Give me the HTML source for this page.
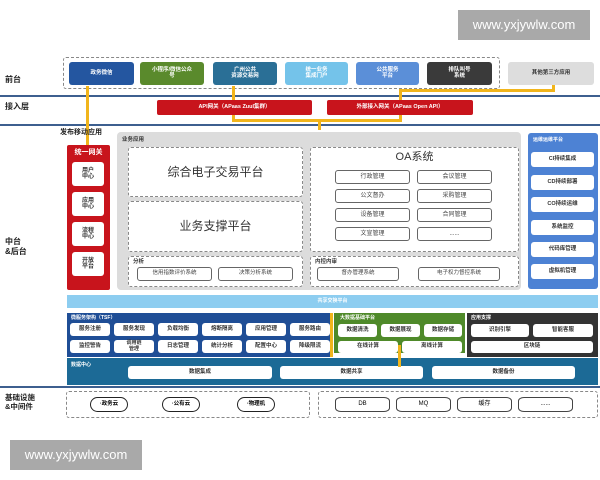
<!DOCTYPE html>
<html><head><meta charset="utf-8"><style>
*{margin:0;padding:0;box-sizing:border-box}
body{width:600px;height:480px;background:#fff;position:relative;overflow:hidden;font-family:"Liberation Sans","Noto Sans CJK SC",sans-serif;}
div{position:absolute}
.c{display:flex;align-items:center;justify-content:center;text-align:center;line-height:1.05}
.f{color:#fff;font-size:5.5px;font-weight:bold;border-radius:3px}
.w{background:#fff;border-radius:3px;font-size:6px;color:#333;font-weight:bold}
.o{background:#fff;border:1px solid #666;border-radius:3px;font-size:6px;color:#444}
.d{border:1px dashed #888;border-radius:3px}
.lb{font-size:8px;font-weight:bold;color:#222;line-height:1.2}
.y{background:#f1b51c}
.t{font-size:5px;font-weight:bold;color:#fff}
</style></head><body>
<div class="c" style="left:458px;top:10px;width:132px;height:30px;background:#a9a9a9;color:#fff;font-size:13px">www.yxjywlw.com</div>
<div class="c" style="left:10px;top:440px;width:132px;height:30px;background:#a9a9a9;color:#fff;font-size:13px">www.yxjywlw.com</div>

<div class="d" style="left:63px;top:57px;width:437px;height:32px"></div>
<div class="c f" style="left:69px;top:62px;width:65px;height:23px;background:#2456a0">政务微信</div>
<div class="c f" style="left:140px;top:62px;width:64px;height:23px;background:#5a8a2c">小程序/微信公众<br>号</div>
<div class="c f" style="left:213px;top:62px;width:64px;height:23px;background:#2a6f96">广州公共<br>资源交易网</div>
<div class="c f" style="left:285px;top:62px;width:63px;height:23px;background:#74c3ea">统一业务<br>集成门户</div>
<div class="c f" style="left:356px;top:62px;width:63px;height:23px;background:#5b8fd8">公共服务<br>平台</div>
<div class="c f" style="left:427px;top:62px;width:65px;height:23px;background:#3a3a3a">排队叫号<br>系统</div>
<div class="c" style="left:508px;top:62px;width:86px;height:23px;background:#ddd;border-radius:3px;font-size:5.5px;font-weight:bold;color:#333">其他第三方应用</div>
<div class="lb" style="left:5px;top:75px">前台</div>
<div style="left:0;top:95px;width:600px;height:2px;background:#3d5f8f"></div>
<div class="lb" style="left:5px;top:102px">接入层</div>
<div class="c f" style="left:157px;top:100px;width:155px;height:15px;background:#c8141c;border-radius:2px">API网关（APaas Zuul集群）</div>
<div class="c f" style="left:327px;top:100px;width:146px;height:15px;background:#c8141c;border-radius:2px">外部接入网关（APaas Open API）</div>
<div style="left:0;top:124px;width:600px;height:2px;background:#3d5f8f"></div>
<!-- yellow -->
<div class="y" style="left:86px;top:86px;width:3px;height:60px"></div>
<div class="y" style="left:232px;top:86px;width:3px;height:14px"></div>
<div class="y" style="left:232px;top:115px;width:3px;height:7px"></div>
<div class="y" style="left:232px;top:119px;width:170px;height:3px"></div>
<div class="y" style="left:318px;top:119px;width:3px;height:11px"></div>
<div class="y" style="left:399px;top:115px;width:3px;height:7px"></div>
<div class="y" style="left:399px;top:89px;width:3px;height:11px"></div>
<div class="y" style="left:399px;top:89px;width:156px;height:3px"></div>
<div class="y" style="left:552px;top:85px;width:3px;height:7px"></div>

<div class="lb" style="left:60px;top:129px;font-size:7px">发布移动应用</div>
<div style="left:67px;top:145px;width:43px;height:145px;background:#c8141c;border-radius:2px"></div>
<div class="c" style="left:67px;top:147px;width:43px;height:12px;color:#fff;font-size:7px;font-weight:bold">统一网关</div>
<div class="c w" style="left:72px;top:162px;width:32px;height:24px">用户<br>中心</div>
<div class="c w" style="left:72px;top:192px;width:32px;height:24px">应用<br>中心</div>
<div class="c w" style="left:72px;top:222px;width:32px;height:24px">流程<br>中心</div>
<div class="c w" style="left:72px;top:252px;width:32px;height:24px">开放<br>平台</div>
<div class="lb" style="left:5px;top:237px">中台<br>&amp;后台</div>

<div style="left:117px;top:132px;width:404px;height:158px;background:#dcdcdc;border-radius:4px"></div>
<div style="left:122px;top:135px;font-size:5.5px;font-weight:bold;color:#333">业务应用</div>
<div class="c d" style="left:128px;top:147px;width:175px;height:50px;background:#fff;font-size:12px;color:#333">综合电子交易平台</div>
<div class="c d" style="left:128px;top:201px;width:175px;height:51px;background:#fff;font-size:12px;color:#333">业务支撑平台</div>
<div class="d" style="left:128px;top:256px;width:175px;height:31px;background:#fff"></div>
<div style="left:133px;top:257px;font-size:5.5px;font-weight:bold;color:#333">分析</div>
<div class="c o" style="left:137px;top:267px;width:75px;height:14px;font-size:5.5px">信用指数评价系统</div>
<div class="c o" style="left:218px;top:267px;width:75px;height:14px;font-size:5.5px">决策分析系统</div>
<div class="d" style="left:310px;top:147px;width:209px;height:105px;background:#fff"></div>
<div class="c" style="left:310px;top:150px;width:209px;height:16px;font-size:11px;color:#333">OA系统</div>
<div class="c o" style="left:335px;top:170px;width:75px;height:14px">行政管理</div>
<div class="c o" style="left:417px;top:170px;width:75px;height:14px">会议管理</div>
<div class="c o" style="left:335px;top:189px;width:75px;height:14px">公文督办</div>
<div class="c o" style="left:417px;top:189px;width:75px;height:14px">采购管理</div>
<div class="c o" style="left:335px;top:208px;width:75px;height:14px">设备管理</div>
<div class="c o" style="left:417px;top:208px;width:75px;height:14px">合同管理</div>
<div class="c o" style="left:335px;top:227px;width:75px;height:14px">文宣管理</div>
<div class="c o" style="left:417px;top:227px;width:75px;height:14px">......</div>
<div class="d" style="left:310px;top:256px;width:209px;height:31px;background:#fff"></div>
<div style="left:315px;top:257px;font-size:5.5px;font-weight:bold;color:#333">内控内审</div>
<div class="c o" style="left:317px;top:267px;width:82px;height:14px;font-size:5.5px">督办管理系统</div>
<div class="c o" style="left:418px;top:267px;width:82px;height:14px;font-size:5.5px">电子权力督控系统</div>

<div style="left:528px;top:133px;width:70px;height:156px;background:#4d82d4;border-radius:3px"></div>
<div class="t" style="left:533px;top:136px">运维运维平台</div>
<div class="c w" style="left:531px;top:152px;width:63px;height:15px;font-size:5.5px">CI持续集成</div>
<div class="c w" style="left:531px;top:175px;width:63px;height:15px;font-size:5.5px">CD持续部署</div>
<div class="c w" style="left:531px;top:197px;width:63px;height:15px;font-size:5.5px">CO持续运维</div>
<div class="c w" style="left:531px;top:220px;width:63px;height:15px;font-size:5.5px">系统监控</div>
<div class="c w" style="left:531px;top:242px;width:63px;height:15px;font-size:5.5px">代码库管理</div>
<div class="c w" style="left:531px;top:264px;width:63px;height:15px;font-size:5.5px">虚拟机管理</div>

<div style="left:67px;top:295px;width:531px;height:13px;background:#8dcdf0"></div>
<div class="c t" style="left:67px;top:295px;width:531px;height:13px">共享交换平台</div>

<div style="left:67px;top:313px;width:265px;height:44px;background:#1f4e96"></div>
<div class="t" style="left:71px;top:314px">微服务架构（TSF）</div>
<div class="c w" style="left:70px;top:323px;width:40px;height:13px;font-size:5.5px">服务注册</div>
<div class="c w" style="left:114px;top:323px;width:40px;height:13px;font-size:5.5px">服务发现</div>
<div class="c w" style="left:158px;top:323px;width:40px;height:13px;font-size:5.5px">负载均衡</div>
<div class="c w" style="left:202px;top:323px;width:40px;height:13px;font-size:5.5px">熔断隔离</div>
<div class="c w" style="left:246px;top:323px;width:40px;height:13px;font-size:5.5px">应用管理</div>
<div class="c w" style="left:290px;top:323px;width:40px;height:13px;font-size:5.5px">服务路由</div>
<div class="c w" style="left:70px;top:340px;width:40px;height:13px;font-size:5.5px">监控警告</div>
<div class="c w" style="left:114px;top:340px;width:40px;height:13px;font-size:5px">调用链<br>管理</div>
<div class="c w" style="left:158px;top:340px;width:40px;height:13px;font-size:5.5px">日志管理</div>
<div class="c w" style="left:202px;top:340px;width:40px;height:13px;font-size:5.5px">统计分析</div>
<div class="c w" style="left:246px;top:340px;width:40px;height:13px;font-size:5.5px">配置中心</div>
<div class="c w" style="left:290px;top:340px;width:40px;height:13px;font-size:5.5px">降级限流</div>
<div style="left:334px;top:313px;width:131px;height:40px;background:#4f8a2a"></div>
<div class="t" style="left:340px;top:314px">大数据基础平台</div>
<div class="c w" style="left:338px;top:324px;width:39px;height:13px;font-size:5.5px">数据清洗</div>
<div class="c w" style="left:381px;top:324px;width:39px;height:13px;font-size:5.5px">数据展现</div>
<div class="c w" style="left:424px;top:324px;width:38px;height:13px;font-size:5.5px">数据存储</div>
<div class="c w" style="left:338px;top:341px;width:60px;height:12px;font-size:5.5px">在线计算</div>
<div class="c w" style="left:402px;top:341px;width:60px;height:12px;font-size:5.5px">离线计算</div>
<div style="left:467px;top:313px;width:131px;height:44px;background:#333"></div>
<div class="t" style="left:471px;top:314px">应用支撑</div>
<div class="c w" style="left:471px;top:324px;width:58px;height:13px;font-size:5.5px">识别引擎</div>
<div class="c w" style="left:533px;top:324px;width:60px;height:13px;font-size:5.5px">智能客服</div>
<div class="c w" style="left:471px;top:341px;width:122px;height:12px;font-size:5.5px">区块链</div>

<div style="left:67px;top:358px;width:531px;height:27px;background:#1c6a96"></div>
<div class="t" style="left:71px;top:361px">数据中心</div>
<div class="c w" style="left:128px;top:366px;width:144px;height:13px;font-size:5.5px">数据集成</div>
<div class="c w" style="left:280px;top:366px;width:143px;height:13px;font-size:5.5px">数据共享</div>
<div class="c w" style="left:432px;top:366px;width:143px;height:13px;font-size:5.5px">数据备份</div>
<div class="y" style="left:330px;top:313px;width:3px;height:44px"></div>
<div class="y" style="left:398px;top:345px;width:3px;height:22px"></div>
<div style="left:0;top:386px;width:600px;height:2px;background:#3d5f8f"></div>

<div class="lb" style="left:5px;top:393px;font-size:7.5px">基础设施<br>&amp;中间件</div>
<div class="d" style="left:66px;top:391px;width:244px;height:27px"></div>
<div class="d" style="left:318px;top:391px;width:280px;height:27px"></div>
<div class="c" style="left:90px;top:397px;width:38px;height:15px;border:1.3px solid #222;border-radius:10px;font-size:5.5px;font-weight:bold">·政务云</div>
<div class="c" style="left:162px;top:397px;width:38px;height:15px;border:1.3px solid #222;border-radius:10px;font-size:5.5px;font-weight:bold">·公有云</div>
<div class="c" style="left:237px;top:397px;width:38px;height:15px;border:1.3px solid #222;border-radius:10px;font-size:5.5px;font-weight:bold">·物理机</div>
<div class="c" style="left:335px;top:397px;width:55px;height:15px;border:1px solid #444;border-radius:6px/4px;font-size:6px">DB</div>
<div class="c" style="left:396px;top:397px;width:55px;height:15px;border:1px solid #444;border-radius:6px/4px;font-size:6px">MQ</div>
<div class="c" style="left:457px;top:397px;width:55px;height:15px;border:1px solid #444;border-radius:6px/4px;font-size:6px">缓存</div>
<div class="c" style="left:518px;top:397px;width:55px;height:15px;border:1px solid #444;border-radius:6px/4px;font-size:6px">......</div>
</body></html>
